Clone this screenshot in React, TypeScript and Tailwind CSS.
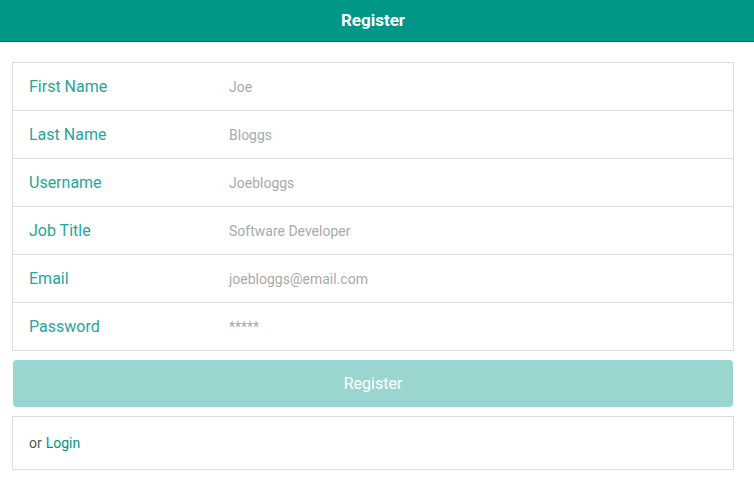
import React from "react";

const rows: [string, string][] = [
  ["First Name", "Joe"],
  ["Last Name", "Bloggs"],
  ["Username", "Joebloggs"],
  ["Job Title", "Software Developer"],
  ["Email", "joebloggs@email.com"],
  ["Password", "*****"],
];

export default function App() {
  return (
    <div className="min-h-[491px] w-[754px] bg-white font-['Roboto',sans-serif]">
      <div className="flex h-[42px] items-center justify-center border-b border-[#00695c] bg-[#009688] pr-[8px]">
        <span className="text-[17px] font-bold text-white">Register</span>
      </div>
      <div className="ml-[12px] mt-[20px] w-[722px]">
        <div className="border border-[#dddddd]">
          {rows.map(([label, value], i) => (
            <div
              key={label}
              className={`flex items-center ${i > 0 ? "h-[48px] border-t border-[#dddddd]" : "h-[47px]"}`}
            >
              <div className="w-[216px] pl-[16px] text-[16px] text-[#26a69a]">{label}</div>
              <div className="pt-[2px] text-[14px] text-[#aaaaaa]">{value}</div>
            </div>
          ))}
        </div>
        <div className="mx-[1px] mt-[9px] flex h-[47px] items-center justify-center rounded-[4px] bg-[#9ad6cf] text-[16px] text-white">
          Register
        </div>
        <div className="mt-[9px] flex h-[54px] items-center border border-[#dddddd] pl-[16px] text-[14px]">
          <span className="text-[#555555]">or</span>
          <span className="ml-[4px] text-[#009688]">Login</span>
        </div>
      </div>
    </div>
  );
}
